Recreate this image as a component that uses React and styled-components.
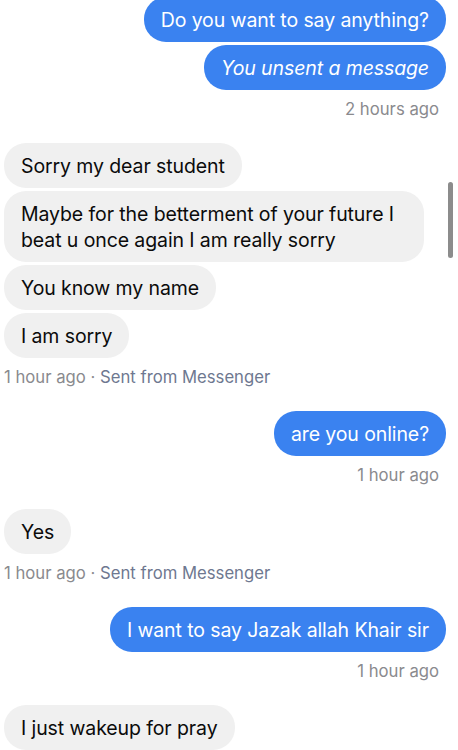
import React from 'react';
import styled, {createGlobalStyle} from 'styled-components';


const GlobalStyle = createGlobalStyle`
    html, body {
        margin: 0;
        padding: 0;
        background: #ffffff;
    }
    body {
        font-family: Inter, "Liberation Sans", Arial, sans-serif;
        -webkit-font-smoothing: antialiased;
    }
`;

const ChatWrapper = styled.main`
    position: relative;
    width: 458px;
    height: 750px;
    overflow: hidden;
    background: #ffffff;
`;

const Thread = styled.div`
    display: flex;
    flex-direction: column;
    gap: 23px;
    margin-top: -3px;
    padding: 0 12px 0 4px;
`;

const Group = styled.section`
    display: flex;
    flex-direction: column;
    align-items: ${props => props.$mine ? 'flex-end' : 'flex-start'};
    gap: 3px;
`;

const Bubble = styled.div`
    box-sizing: border-box;
    max-width: 420px;
    padding: 9.5px 17px;
    border-radius: 22px;
    background: ${props => props.$mine ? '#3a82f0' : '#f0f0f0'};
    color: ${props => props.$mine ? '#ffffff' : '#0b0b0b'};
    font-size: 19.5px;
    line-height: 26px;
    font-style: ${props => props.$italic ? 'italic' : 'normal'};
    letter-spacing: -0.1px;
`;

const Meta = styled.div`
    margin-top: 5px;
    padding-right: ${props => props.$mine ? '7px' : '0'};
    font-size: 16.7px;
    line-height: 22px;
    color: #8a8a8e;
`;

const Source = styled.span`
    color: #6e7890;
`;

const ScrollThumb = styled.div`
    position: absolute;
    top: 182px;
    right: 5px;
    width: 5px;
    height: 76px;
    border-radius: 3px;
    background: #8c8c8c;
`;

const thread = [
    {mine: true, bubbles: [{text: 'Do you want to say anything?'}, {text: 'You unsent a message', italic: true}], time: '2 hours ago'},
    {mine: false, bubbles: [
        {text: 'Sorry my dear student'},
        {text: 'Maybe for the betterment of your future I beat u once again I am really sorry'},
        {text: 'You know my name'},
        {text: 'I am sorry'},
    ], time: '1 hour ago'},
    {mine: true, bubbles: [{text: 'are you online?'}], time: '1 hour ago'},
    {mine: false, bubbles: [{text: 'Yes'}], time: '1 hour ago'},
    {mine: true, bubbles: [{text: 'I want to say Jazak allah Khair sir'}], time: '1 hour ago'},
    {mine: false, bubbles: [{text: 'I just wakeup for pray'}]},
];

const App = () => {
    return (
        <ChatWrapper>
            <GlobalStyle />
            <Thread>
                {thread.map((group, i) => (
                    <Group key={i} $mine={group.mine}>
                        {group.bubbles.map((b, j) => (
                            <Bubble key={j} $mine={group.mine} $italic={b.italic}>{b.text}</Bubble>
                        ))}
                        {group.time && (
                            <Meta $mine={group.mine}>
                                {group.time}
                                {!group.mine && <> · <Source>Sent from Messenger</Source></>}
                            </Meta>
                        )}
                    </Group>
                ))}
            </Thread>
            <ScrollThumb />
        </ChatWrapper>
    );
};

export default App;
